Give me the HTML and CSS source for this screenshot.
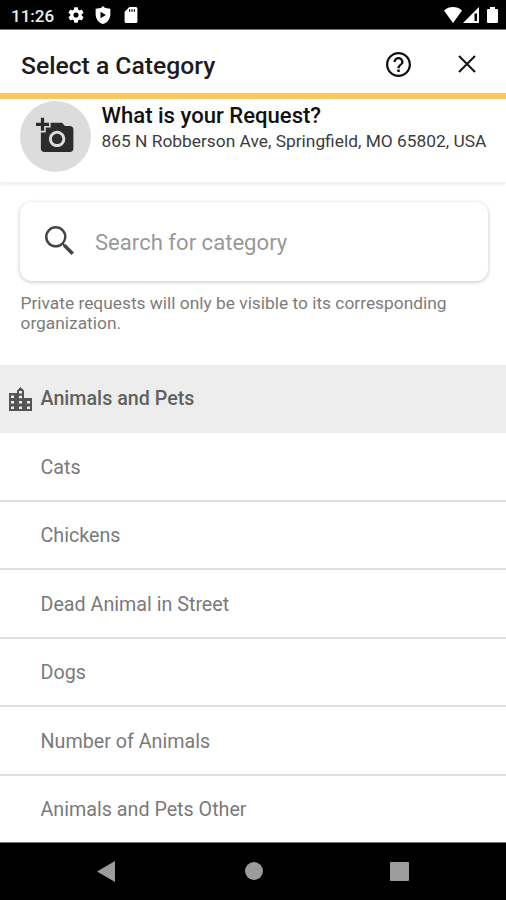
FILE: index.html
```html
<!DOCTYPE html>
<html lang="en">
<head>
<meta charset="utf-8">
<title>Select a Category</title>
<link rel="stylesheet" href="styles.css">
</head>
<body>
<div class="screen">
  <div class="status">
    <span class="clock">11:26</span>
    <svg class="gear" viewBox="2 2 20 20"><path fill-rule="evenodd" d="M19.14 12.94a7 7 0 0 0 0-1.88l2.03-1.58a.5.5 0 0 0 .12-.61l-1.92-3.32a.5.5 0 0 0-.59-.22l-2.39.96a7 7 0 0 0-1.62-.94l-.36-2.54A.5.5 0 0 0 13.93 2.400h-3.84a.5.5 0 0 0-.47.41l-.36 2.54a7 7 0 0 0-1.62.94l-2.39-.96a.5.5 0 0 0-.59.22L2.74 8.870a.5.5 0 0 0 .12.61l2.03 1.58a7 7 0 0 0 0 1.880l-2.030 1.580a.5.5 0 0 0-.12.61l1.920 3.320a.5.5 0 0 0 .59.22l2.390-.96a7 7 0 0 0 1.620.94l.36 2.540a.5.5 0 0 0 .48.41h3.840a.5.5 0 0 0 .47-.41l.36-2.540a7 7 0 0 0 1.620-.94l2.390.96a.5.5 0 0 0 .59-.22l1.920-3.320a.5.5 0 0 0-.12-.61zM12 15.200A3.200 3.200 0 1 1 12 8.800a3.200 3.200 0 0 1 0 6.400z"/></svg>
    <svg class="shield" viewBox="3 1 18 22"><path fill-rule="evenodd" d="M12 1 9.500 3.500 3 4.500V11c0 5.600 3.800 10.700 9 12 5.200-1.300 9-6.400 9-12V4.500l-6.500-1zM9 8l6.500 4L9 16z"/></svg>
    <svg class="sd" viewBox="4 2 16 20"><path fill-rule="evenodd" d="M18 2h-8L4 8v12c0 1.100.9 2 2 2h12c1.100 0 2-.9 2-2V4c0-1.100-.9-2-2-2zM9.500 4.800h1.500v3.200H9.500zm3 0H14v3.200h-1.500zm3 0H17v3.200h-1.500z"/></svg>
    <span class="spacer"></span>
    <svg class="wifi" viewBox="0 0 18 16"><path d="M0 3.500C5-1.100 13-1.100 18 3.500L9 16z"/></svg>
    <svg class="signal" viewBox="0 0 16 16"><path fill-rule="evenodd" d="M0 16 16 0v16zM11.500 6.500V14H14V6.500z"/></svg>
    <svg class="battery" viewBox="0 0 11 16"><path d="M3 0h5v2h2q1 0 1 1v12q0 1-1 1H1q-1 0-1-1V3q0-1 1-1h2z"/></svg>
  </div>
  <header class="bar">
    <h1><span>Select a Category</span></h1>
    <svg class="help" viewBox="2 2 20 20"><path d="M11 18h2v-2h-2v2zm1-16C6.480 2 2 6.480 2 12s4.480 10 10 10 10-4.480 10-10S17.520 2 12 2zm0 18.200c-4.500 0-8.200-3.700-8.200-8.200S7.500 3.800 12 3.800s8.200 3.700 8.200 8.200-3.700 8.200-8.200 8.200zm0-14.200c-2.210 0-4 1.790-4 4h1.800c0-1.200 1-2.200 2.200-2.200s2.200 1 2.200 2.200c0 2-3.100 1.800-3.100 5H13c0-2.250 3-2.500 3-5 0-2.210-1.790-4-4-4z"/></svg>
    <svg class="close" viewBox="0 0 18 18"><path d="m1 1 16 16M17 1 1 17"/></svg>
  </header>
  <section class="request">
    <div class="avatar">
      <svg viewBox="0 0 24 22"><path fill-rule="evenodd" d="M3 4V1h2v3h3v2H5v3H3V6H0V4zm3 6V7h3V4h7l1.830 2H21c1.100 0 2 .9 2 2v12c0 1.100-.9 2-2 2H5c-1.100 0-2-.9-2-2V10zm7 9c2.760 0 5-2.240 5-5s-2.240-5-5-5-5 2.240-5 5 2.240 5 5 5zm-3.200-5c0 1.770 1.430 3.200 3.200 3.200s3.200-1.430 3.200-3.200-1.430-3.200-3.200-3.200-3.200 1.430-3.200 3.200z"/></svg>
    </div>
    <div>
      <h2><span>What is your Request?</span></h2>
      <p class="address"><span>865 N Robberson Ave, Springfield, MO 65802, USA</span></p>
    </div>
  </section>
  <main>
    <label class="search">
      <svg viewBox="3 3 17.500 17.500"><path d="M15.500 14h-.79l-.28-.27A6.470 6.470 0 0 0 16 9.500 6.500 6.500 0 1 0 9.500 16c1.610 0 3.090-.59 4.230-1.570l.27.28v.79l5 4.990L20.490 19zm-6 .5a5 5 0 1 1 0-10 5 5 0 0 1 0 10z"/></svg>
      <span>Search for category</span>
    </label>
    <p class="hint">Private requests will only be visible to its corresponding<br>organization.</p>
    <div class="group">
      <svg viewBox="0 0 23 24"><path fill-rule="evenodd" d="M0 24V6h8V3.500L11.500 0 15 3.500V11h8v13zM2 8.500V11h3V8.500zm0 5.500v2.500h3V14zm0 5.500V22h3v-2.500zM10 4v2.500h3V4zm0 4.800v2.500h3V8.800zm0 5.200v2.500h3V14zm0 5.500V22h3v-2.500zm8-5.500v2.500h3V14zm0 5.500V22h3v-2.500z"/></svg>
      <span>Animals and Pets</span>
    </div>
    <ul>
      <li><span>Cats</span></li>
      <li><span>Chickens</span></li>
      <li><span>Dead Animal in Street</span></li>
      <li><span>Dogs</span></li>
      <li><span>Number of Animals</span></li>
      <li><span>Animals and Pets Other</span></li>
    </ul>
  </main>
  <nav>
    <svg viewBox="0 0 18 21"><path d="M0 10.500 18 0v21z"/></svg>
    <svg viewBox="0 0 18 18"><circle cx="9" cy="9" r="9"/></svg>
    <svg viewBox="0 0 19 19"><rect width="19" height="19" rx="1"/></svg>
  </nav>
</div>
</body>
</html>
```
FILE: styles.css
```css
* { box-sizing: border-box; }
body, h1, h2, p, ul { margin: 0; padding: 0; }
body { background: #fff; font-family: Roboto, sans-serif; }
svg { display: block; flex: none; }
.screen { width: 506px; height: 900px; display: flex; flex-direction: column; overflow: hidden; }

.status { height: 30px; flex: none; background: #000; border-bottom: 1px solid #777; display: flex; align-items: center; padding: 1px 8px 0 11px; color: #eee; fill: #fff; }
.clock { width: 57px; font-size: 17px; font-weight: 500; padding-top: 1px; }
.gear { width: 16px; height: 16px; margin-right: 11px; }
.shield { width: 16px; height: 18px; margin-right: 13px; }
.sd { width: 14px; height: 16px; }
.spacer { flex: 1; }
.wifi { width: 18px; height: 16px; margin-right: 1px; }
.signal { width: 16px; height: 16px; margin-right: 8px; }
.battery { width: 11px; height: 16px; }

.bar { height: 69px; flex: none; display: flex; align-items: center; padding: 5px 30px 0 21px; border-bottom: 6px solid #fdc75b; }
h1 { flex: 1; font-size: 24.700px; font-weight: 500; line-height: 30px; padding-top: 4px; color: #1c1c1c; }
.help { width: 25px; height: 25px; margin-right: 47px; fill: #111; }
.close { width: 18px; height: 18px; stroke: #111; stroke-width: 2; }

.request { height: 84px; flex: none; display: flex; gap: 10.500px; padding: 2px 0 0 20px; border-bottom: 1px solid #f2f2f2; box-shadow: 0 2px 3px #f0f0f0; }
.avatar { width: 71px; height: 71px; border-radius: 50%; background: #dcdcdc; padding: 15px 0 0 16px; }
.avatar svg { width: 39px; height: 36px; fill: #2c2c2c; }
h2 { font-size: 22.100px; font-weight: 500; line-height: 28px; color: #111; white-space: nowrap; }
.address { font-size: 17.350px; line-height: 24px; color: #3c3c3c; white-space: nowrap; }

main { flex: 1; min-height: 0; overflow: hidden; padding-top: 19px; }
.search { height: 79px; margin: 0 18px 0 20px; border-radius: 12px; background: #fff; box-shadow: 0 1px 4px #c4c4c4; display: flex; align-items: center; padding: 0 0 0 25px; color: #999; font-size: 22.100px; }
.search svg { width: 29px; height: 29px; margin: -2px 21px 0 0; fill: #444; }
.search span { padding-top: 0; }
.hint { margin: 12px 0 0 20.500px; height: 72px; font-size: 17.350px; line-height: 20px; color: #7c7c7c; white-space: nowrap; }
.group { height: 68px; background: #ededed; display: flex; align-items: center; padding: 0 0 1px 9px; gap: 8.500px; font-size: 19.700px; font-weight: 500; color: #616161; }
.group svg { width: 23px; height: 24px; fill: #555; }
ul { list-style: none; }
li { height: 68.500px; display: flex; align-items: center; padding: 2px 0 0 40.500px; font-size: 19.700px; color: #7a7a7a; border-bottom: 2px solid #dfdfdf; }
li:last-child { border-bottom: 0; padding-top: 0; }

nav { height: 58px; flex: none; background: #000; border-top: 1px solid #777; display: flex; align-items: center; padding: 0 0 1px 97px; fill: #9c9c9c; }
nav svg:nth-child(1) { width: 18px; height: 21px; margin-right: 130px; }
nav svg:nth-child(2) { width: 18px; height: 18px; margin-right: 127px; }
nav svg:nth-child(3) { width: 19px; height: 19px; }
```
